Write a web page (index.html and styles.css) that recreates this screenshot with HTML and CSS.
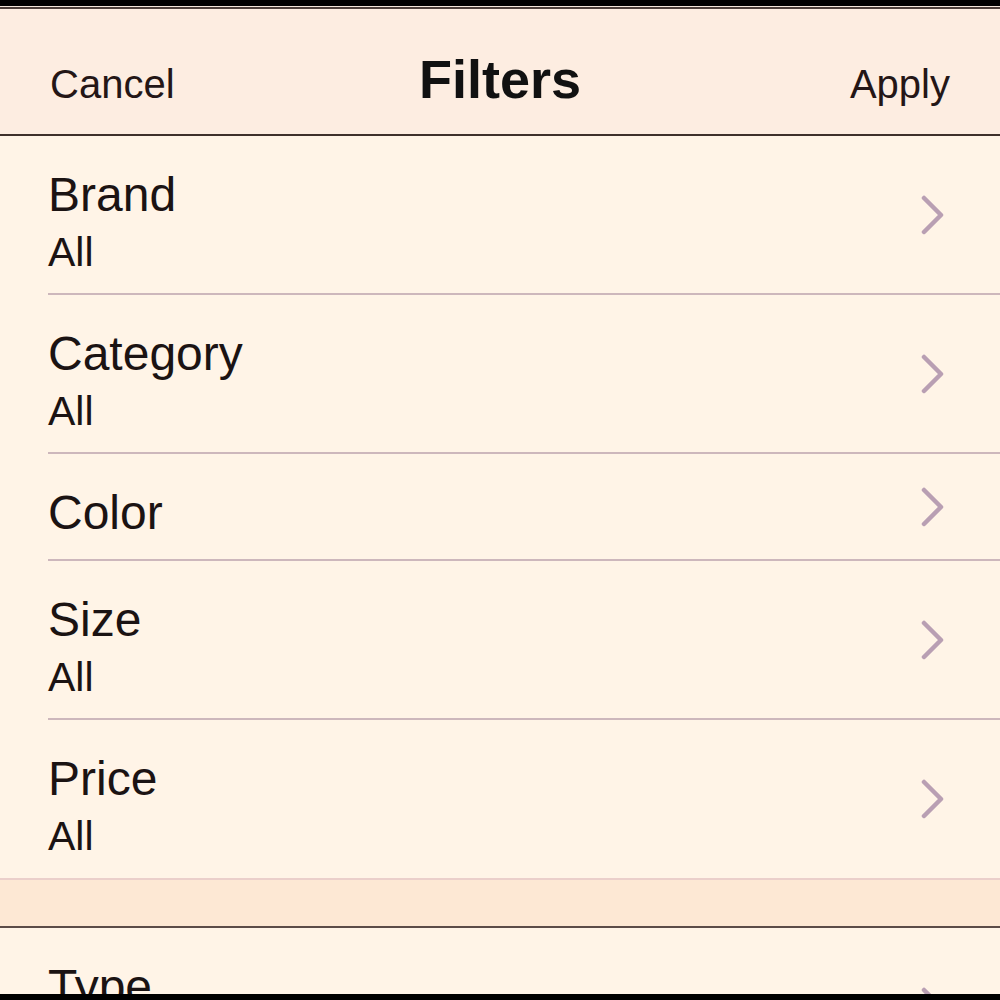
FILE: index.html
```html
<!doctype html>
<html lang="en">
<head>
    <meta charset="UTF-8">
    <meta name="viewport" content="width=device-width, initial-scale=1.0">
    <title>Filters</title>
    <link rel="stylesheet" href="styles.css">
</head>
<body>
    <div class="screen">
        <div class="status-bar"></div>
        <header class="nav-bar">
            <button class="nav-btn nav-left">Cancel</button>
            <h1 class="nav-title">Filters</h1>
            <button class="nav-btn nav-right">Apply</button>
        </header>
        <div class="filter-list">
            <div class="filter-row">
                <div class="filter-body">
                    <div class="filter-text">
                        <div class="filter-name">Brand</div>
                        <div class="filter-value">All</div>
                    </div>
                    <svg class="chevron" viewBox="0 0 24 40"><path d="M3 3 L20 20 L3 37"/></svg>
                </div>
            </div>
            <div class="filter-row">
                <div class="filter-body">
                    <div class="filter-text">
                        <div class="filter-name">Category</div>
                        <div class="filter-value">All</div>
                    </div>
                    <svg class="chevron" viewBox="0 0 24 40"><path d="M3 3 L20 20 L3 37"/></svg>
                </div>
            </div>
            <div class="filter-row">
                <div class="filter-body single">
                    <div class="filter-text">
                        <div class="filter-name">Color</div>
                    </div>
                    <svg class="chevron" viewBox="0 0 24 40"><path d="M3 3 L20 20 L3 37"/></svg>
                </div>
            </div>
            <div class="filter-row">
                <div class="filter-body">
                    <div class="filter-text">
                        <div class="filter-name">Size</div>
                        <div class="filter-value">All</div>
                    </div>
                    <svg class="chevron" viewBox="0 0 24 40"><path d="M3 3 L20 20 L3 37"/></svg>
                </div>
            </div>
            <div class="filter-row">
                <div class="filter-body last">
                    <div class="filter-text">
                        <div class="filter-name">Price</div>
                        <div class="filter-value">All</div>
                    </div>
                    <svg class="chevron" viewBox="0 0 24 40"><path d="M3 3 L20 20 L3 37"/></svg>
                </div>
            </div>
            <div class="section-gap"></div>
            <div class="filter-row">
                <div class="filter-body">
                    <div class="filter-text">
                        <div class="filter-name">Type</div>
                    </div>
                    <svg class="chevron" viewBox="0 0 24 40"><path d="M3 3 L20 20 L3 37"/></svg>
                </div>
            </div>
        </div>
        <div class="home-bar"></div>
    </div>
</body>
</html>
```

FILE: styles.css
```css
:root {
    --row-bg: #fff4e7;
    --header-bg: #fdede1;
    --text-color: #1b1313;
    --divider: #cdb7bc;
    --chevron: #b99fb3;
}

body {
    margin: 0;
    padding: 0;
    font-family: 'Liberation Sans', Arial, sans-serif;
    color: var(--text-color);
    background-color: var(--row-bg);
}

.screen {
    width: 1000px;
    height: 1000px;
    display: flex;
    flex-direction: column;
    overflow: hidden;
    background: var(--row-bg);
}

.status-bar {
    height: 6px;
    background: #000;
    border-bottom: 1px solid #f3e6da;
    flex: none;
}

.nav-bar {
    flex: none;
    height: 85px;
    padding: 40px 50px 0;
    display: grid;
    grid-template-columns: 1fr auto 1fr;
    align-items: baseline;
    background: var(--header-bg);
    border-top: 2px solid #4d3f3a;
    border-bottom: 2px solid #3e302b;
}

.nav-btn {
    background: none;
    border: none;
    padding: 0;
    font-family: inherit;
    font-size: 40px;
    line-height: 48px;
    color: #241616;
    cursor: pointer;
}

.nav-left {
    justify-self: start;
}

.nav-right {
    justify-self: end;
}

.nav-title {
    margin: 0;
    font-size: 54px;
    line-height: 60px;
    font-weight: 700;
    color: #111;
}

.filter-list {
    flex: 1;
    overflow: hidden;
}

.filter-row {
    padding-left: 48px;
}

.filter-body {
    height: 159px;
    box-sizing: border-box;
    padding: 0 55px 0 0;
    display: flex;
    justify-content: space-between;
    align-items: center;
    border-bottom: 2px solid var(--divider);
}

.filter-body.single {
    height: 107px;
}

.filter-body.last {
    border-bottom: none;
    height: 158px;
}

.filter-text {
    align-self: flex-start;
    padding-top: 31px;
}

.filter-name {
    font-size: 48px;
    line-height: 56px;
}

.filter-value {
    font-size: 41px;
    line-height: 50px;
    margin-top: 4px;
}

.chevron {
    width: 24px;
    height: 40px;
    fill: none;
    stroke: var(--chevron);
    stroke-width: 4.5;
    stroke-linecap: round;
    stroke-linejoin: round;
}

.section-gap {
    height: 46px;
    background: #fde8d4;
    border-top: 2px solid #ebcfcb;
    border-bottom: 2px solid #5c4c48;
}

.home-bar {
    flex: none;
    height: 6px;
    background: #000;
}
```
